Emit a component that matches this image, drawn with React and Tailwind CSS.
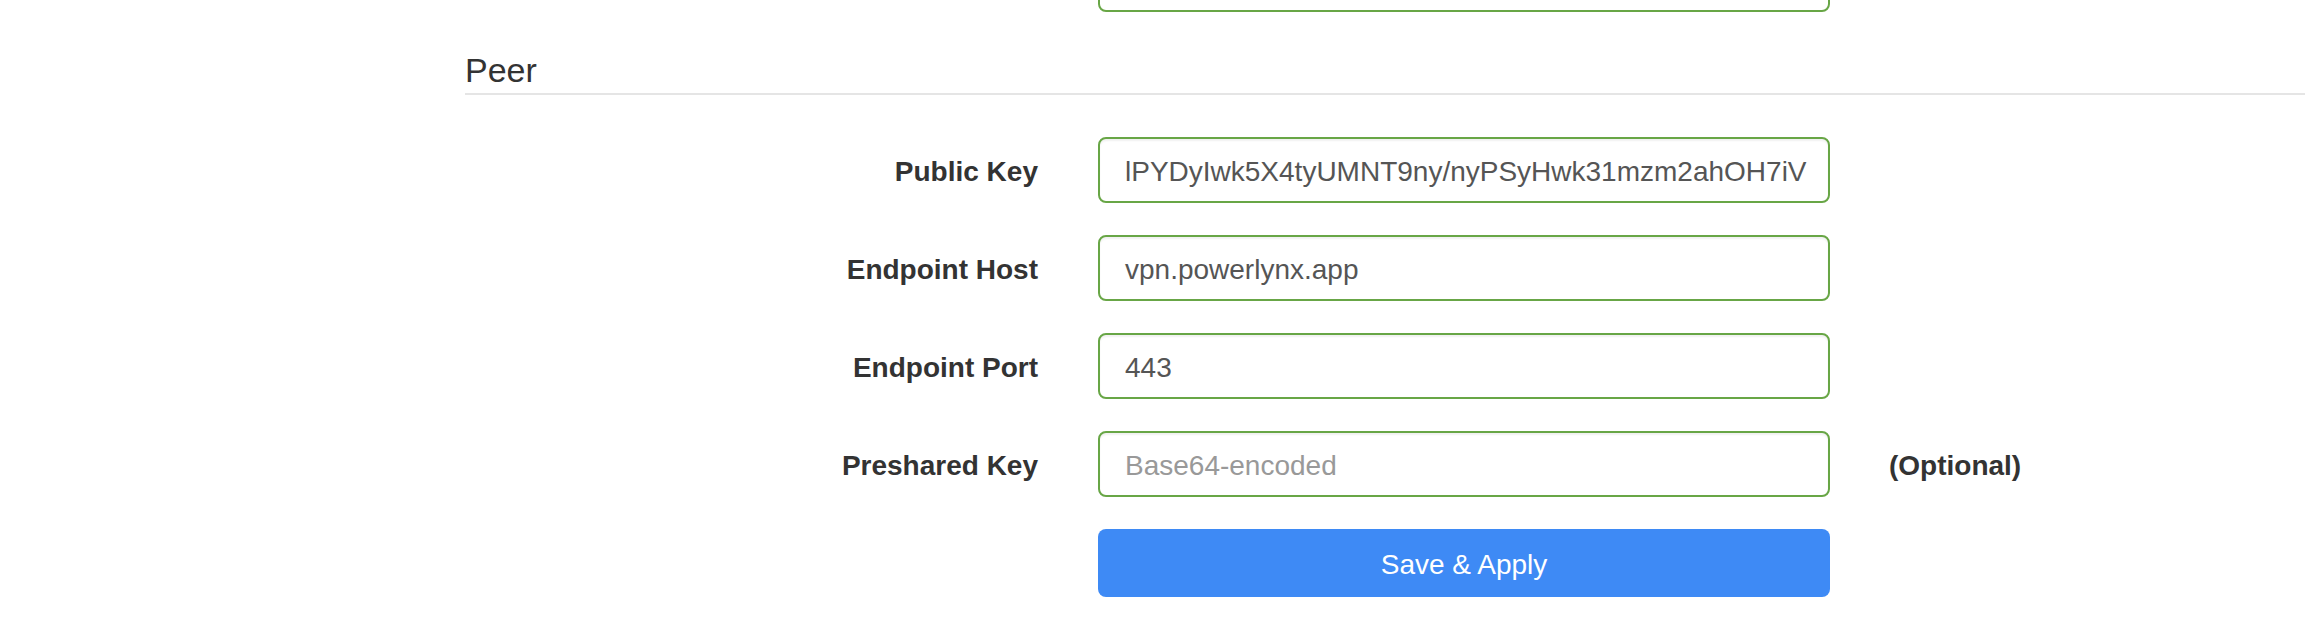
import React from "react";

const font = { fontFamily: '"Liberation Sans", Arial, sans-serif' };

function Field({ label, value, placeholder, extra }) {
  return (
    <div className="flex items-center h-[66px]">
      <div className="w-[573px] text-right text-[28px] font-bold text-[#333] pt-[3px]">{label}</div>
      <div className="ml-[60px] w-[732px] h-[66px] border-2 border-[#68a646] rounded-[8px] bg-white shadow-[inset_0_2px_2px_rgba(0,0,0,0.06)] flex items-center pl-[25px] pr-[20px] pt-[3px] overflow-hidden">
        {value ? (
          <span className="text-[28px] text-[#555] whitespace-nowrap">{value}</span>
        ) : (
          <span className="text-[28px] text-[#999] whitespace-nowrap">{placeholder}</span>
        )}
      </div>
      {extra && <div className="ml-[59px] text-[28px] font-bold text-[#333] pt-[3px]">{extra}</div>}
    </div>
  );
}

export default function App() {
  return (
    <div className="w-[2316px] h-[626px] bg-white overflow-hidden" style={font}>
      <div className="h-[12px] overflow-hidden flex items-end">
        <div className="ml-[1098px] w-[732px] h-[66px] shrink-0 border-2 border-[#68a646] rounded-[8px] bg-white" />
      </div>
      <div className="pl-[465px] pr-[11px]">
        <h3 className="mt-[38px] text-[34px] leading-[40px] text-[#333] font-normal">Peer</h3>
        <div className="mt-[3px] h-[2px] bg-[#e5e5e5]" />
      </div>
      <div className="pl-[465px] mt-[42px] flex flex-col gap-[32px]">
        <Field label="Public Key" value="lPYDyIwk5X4tyUMNT9ny/nyPSyHwk31mzm2ahOH7iV" />
        <Field label="Endpoint Host" value="vpn.powerlynx.app" />
        <Field label="Endpoint Port" value="443" />
        <Field label="Preshared Key" placeholder="Base64-encoded" extra="(Optional)" />
        <div className="flex items-center h-[68px]">
          <div className="w-[573px]" />
          <button className="ml-[60px] w-[732px] h-[68px] rounded-[8px] bg-[#3e8af5] text-white text-[28px] pt-[3px]">
            Save &amp; Apply
          </button>
        </div>
      </div>
    </div>
  );
}
